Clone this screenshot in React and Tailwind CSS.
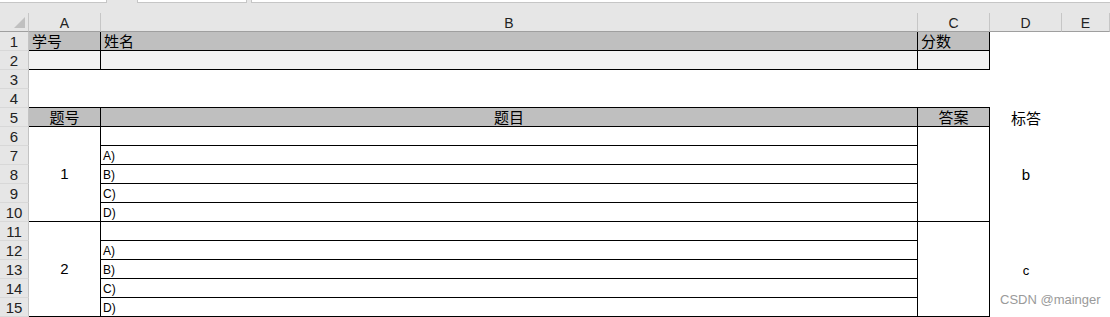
import React from "react";

const F = "font-['Noto_Sans_CJK_SC','Liberation_Sans',sans-serif]";

function RN({ n }) {
  return (
    <div className="flex items-center justify-center bg-[#e6e6e6] border-b border-r border-b-[#d8d8d8] border-r-[#c3c3c3] text-[15px] leading-none text-[#222] font-['Liberation_Sans',sans-serif] pt-[1px]">
      {n}
    </div>
  );
}

function ColH({ children }) {
  return (
    <div className="flex items-end justify-center pb-[1px] bg-[#e6e6e6] border-r border-b border-r-[#c6c6c6] border-b-[#9f9f9f] text-[14px] leading-none text-[#222] font-['Liberation_Sans',sans-serif]">
      {children}
    </div>
  );
}

const box = "border-r border-b border-black";

export default function App() {
  const blank = (k) => <div key={k} />;
  const rows = [];

  // Row 1
  rows.push(<RN key="r1" n={1} />);
  rows.push(<div key="a1" className={`flex items-end px-[3px] bg-[#bfbfbf] ${box} text-[15px] leading-[18px] text-black`}>学号</div>);
  rows.push(<div key="b1" className={`flex items-end px-[3px] bg-[#bfbfbf] ${box} text-[15px] leading-[18px] text-black`}>姓名</div>);
  rows.push(<div key="c1" className={`flex items-end px-[3px] bg-[#bfbfbf] ${box} text-[15px] leading-[18px] text-black`}>分数</div>);
  rows.push(blank("d1"), blank("e1"));

  // Row 2
  rows.push(<RN key="r2" n={2} />);
  rows.push(<div key="a2" className={`bg-[#f2f2f2] ${box}`} />);
  rows.push(<div key="b2" className={`bg-[#f2f2f2] ${box}`} />);
  rows.push(<div key="c2" className={`bg-[#f2f2f2] ${box}`} />);
  rows.push(blank("d2"), blank("e2"));

  // Row 3
  rows.push(<RN key="r3" n={3} />);
  rows.push(blank("a3"), blank("b3"), blank("c3"), blank("d3"), blank("e3"));

  // Row 4
  rows.push(<RN key="r4" n={4} />);
  rows.push(<div key="a4" className="border-b border-black" />);
  rows.push(<div key="b4" className="border-b border-black" />);
  rows.push(<div key="c4" className="border-b border-black" />);
  rows.push(blank("d4"), blank("e4"));

  // Row 5
  rows.push(<RN key="r5" n={5} />);
  ["题号", "题目", "答案"].forEach((t, i) =>
    rows.push(
      <div key={"h5" + i} className={`flex items-end justify-center bg-[#bfbfbf] ${box} text-[15px] leading-[18px] text-black`}>
        {t}
      </div>
    )
  );
  rows.push(
    <div key="d5" className="flex items-end justify-center text-[15px] leading-[18px] text-black">标答</div>
  );
  rows.push(blank("e5"));

  const group = (start, num, ans) => {
    const opts = ["", "A)", "B)", "C)", "D)"];
    opts.forEach((o, i) => {
      const r = start + i;
      rows.push(<RN key={"r" + r} n={r} />);
      if (i === 0) {
        rows.push(
          <div key={"a" + r} className={`row-span-5 flex items-center justify-center ${box} text-[15px] text-black font-['Liberation_Sans',sans-serif]`}>
            {num}
          </div>
        );
      }
      rows.push(
        <div key={"b" + r} className={`flex items-end px-[2px] ${box} text-[12px] leading-[16px] text-black font-['Liberation_Sans',sans-serif]`}>
          {o}
        </div>
      );
      if (i === 0) {
        rows.push(<div key={"c" + r} className={`row-span-5 ${box}`} />);
      }
      rows.push(
        <div key={"d" + r} className={`flex items-end justify-center text-black font-['Liberation_Sans',sans-serif] ${i === 2 ? "" : ""} ${ans.cls}`}>
          {i === 2 ? ans.t : ""}
        </div>
      );
      rows.push(blank("e" + r));
    });
  };
  group(6, "1", { t: "b", cls: "text-[15px] leading-[18px]" });
  group(11, "2", { t: "c", cls: "text-[13px] leading-[17px]" });

  return (
    <div className={`relative w-[1110px] h-[317px] overflow-hidden bg-white ${F}`}>
      {/* top strip */}
      <div className="h-[13px] bg-[#e6e6e6] flex items-start">
        <div className="w-[107px] h-[3px] bg-white border-b border-r border-[#c6c6c6]" />
        <div className="ml-[30px] w-[110px] h-[3px] bg-white border-b border-x border-[#c6c6c6]" />
        <div className="ml-[4px] flex-1 h-[3px] bg-white border-b border-l border-[#c6c6c6]" />
      </div>
      <div className="grid grid-cols-[29px_72px_817px_72px_72px_1fr] auto-rows-[19px]">
        {/* header */}
        <div className="relative bg-[#e6e6e6] border-r border-b border-r-[#c6c6c6] border-b-[#9f9f9f]">
          <svg className="absolute right-[3px] bottom-[3px]" width="11" height="11" viewBox="0 0 11 11">
            <polygon points="11,0 11,11 0,11" fill="#c0c0c0" />
          </svg>
        </div>
        <ColH>A</ColH>
        <ColH>B</ColH>
        <ColH>C</ColH>
        <ColH>D</ColH>
        <ColH>E</ColH>
        {rows}
      </div>
      <div className="absolute left-[1000px] top-[292px] text-[13px] leading-[16px] text-[#9a9a9a] font-['Liberation_Sans',sans-serif]">
        CSDN @mainger
      </div>
    </div>
  );
}
